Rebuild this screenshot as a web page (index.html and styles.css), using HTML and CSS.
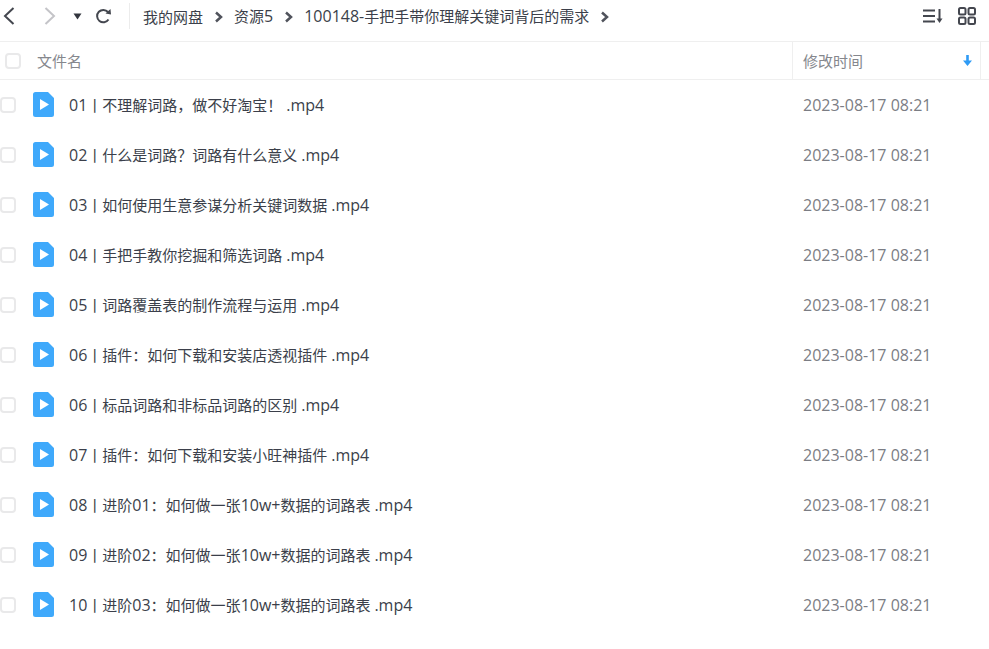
FILE: index.html
```html
<!DOCTYPE html>
<html lang="zh-CN">
  <head>
    <meta charset="UTF-8" />
    <meta name="viewport" content="width=device-width, initial-scale=1.0" />
    <title>我的网盘</title>
    <link rel="stylesheet" href="styles.css">
  </head>

  <body>
    <!-- toolbar -->
    <div class="toolbar">
      <div class="nav">
        <svg class="back" width="14" height="20" viewBox="0 0 14 20"><path d="M11.500 2 L3 10 L11.500 18" /></svg>
        <svg class="forward" width="14" height="20" viewBox="0 0 14 20"><path d="M2.500 2 L11 10 L2.500 18" /></svg>
        <svg class="drop" width="9" height="7" viewBox="0 0 9 7"><path d="M0.500 0.500 H8.500 L4.500 6.500 Z" /></svg>
        <svg class="refresh" width="17" height="17" viewBox="0 0 17 17"><path d="M13.500 11.500 A6.200 6.200 0 1 1 13 4" /><path class="fill" d="M10.500 5.500 L16 6.500 L15.500 1 Z" /></svg>
      </div>
      <div class="crumbs">
        <span>我的网盘</span>
        <svg class="sep" width="9" height="12" viewBox="0 0 9 12"><path d="M2 1.500 L7 6 L2 10.500" /></svg>
        <span>资源<i>5</i></span>
        <svg class="sep" width="9" height="12" viewBox="0 0 9 12"><path d="M2 1.500 L7 6 L2 10.500" /></svg>
        <span><i>100148-</i>手把手带你理解关键词背后的需求</span>
        <svg class="sep" width="9" height="12" viewBox="0 0 9 12"><path d="M2 1.500 L7 6 L2 10.500" /></svg>
      </div>
      <div class="tools">
        <svg class="sort" width="21" height="16" viewBox="0 0 21 16"><path d="M1 2.500 H13 M1 8 H13 M1 13.500 H13 M17.500 1 V13" /><path class="fill" d="M14.500 10.500 H20.500 L17.500 15 Z" /></svg>
        <svg class="grid" width="18" height="18" viewBox="0 0 18 18"><rect x="1" y="1" width="6.500" height="6.500" rx="1.500" /><rect x="10.500" y="1" width="6.500" height="6.500" rx="1.500" /><rect x="1" y="10.500" width="6.500" height="6.500" rx="1.500" /><rect x="10.500" y="10.500" width="6.500" height="6.500" rx="1.500" /></svg>
      </div>
    </div>

    <!-- table head -->
    <div class="head">
      <span class="check head-check"></span>
      <span class="head-name">文件名</span>
      <div class="head-time">
        <span>修改时间</span>
        <svg width="9" height="11" viewBox="0 0 9 11"><path d="M3.200 0 H5.800 V5.500 H9 L4.500 11 L0 5.500 H3.200 Z" /></svg>
      </div>
    </div>

    <!-- files -->
    <div class="list" id="list">
      <div class="row"><span class="check"></span><svg class="file" width="21" height="25" viewBox="0 0 21 25"><path class="paper" d="M2.500 0 H15 L21 6 V22.500 A2.500 2.500 0 0 1 18.500 25 H2.500 A2.500 2.500 0 0 1 0 22.500 V2.500 A2.500 2.500 0 0 1 2.500 0 Z" /><path class="play" d="M7 7 L16 12.500 L7 18 Z" /></svg><span class="name"><i>01</i>丨不理解词路，做不好淘宝！ <i>.mp4</i></span><span class="time">2023-08-17 08:21</span></div>
      <div class="row"><span class="check"></span><svg class="file" width="21" height="25" viewBox="0 0 21 25"><path class="paper" d="M2.500 0 H15 L21 6 V22.500 A2.500 2.500 0 0 1 18.500 25 H2.500 A2.500 2.500 0 0 1 0 22.500 V2.500 A2.500 2.500 0 0 1 2.500 0 Z" /><path class="play" d="M7 7 L16 12.500 L7 18 Z" /></svg><span class="name"><i>02</i>丨什么是词路？词路有什么意义 <i>.mp4</i></span><span class="time">2023-08-17 08:21</span></div>
      <div class="row"><span class="check"></span><svg class="file" width="21" height="25" viewBox="0 0 21 25"><path class="paper" d="M2.500 0 H15 L21 6 V22.500 A2.500 2.500 0 0 1 18.500 25 H2.500 A2.500 2.500 0 0 1 0 22.500 V2.500 A2.500 2.500 0 0 1 2.500 0 Z" /><path class="play" d="M7 7 L16 12.500 L7 18 Z" /></svg><span class="name"><i>03</i>丨如何使用生意参谋分析关键词数据 <i>.mp4</i></span><span class="time">2023-08-17 08:21</span></div>
      <div class="row"><span class="check"></span><svg class="file" width="21" height="25" viewBox="0 0 21 25"><path class="paper" d="M2.500 0 H15 L21 6 V22.500 A2.500 2.500 0 0 1 18.500 25 H2.500 A2.500 2.500 0 0 1 0 22.500 V2.500 A2.500 2.500 0 0 1 2.500 0 Z" /><path class="play" d="M7 7 L16 12.500 L7 18 Z" /></svg><span class="name"><i>04</i>丨手把手教你挖掘和筛选词路 <i>.mp4</i></span><span class="time">2023-08-17 08:21</span></div>
      <div class="row"><span class="check"></span><svg class="file" width="21" height="25" viewBox="0 0 21 25"><path class="paper" d="M2.500 0 H15 L21 6 V22.500 A2.500 2.500 0 0 1 18.500 25 H2.500 A2.500 2.500 0 0 1 0 22.500 V2.500 A2.500 2.500 0 0 1 2.500 0 Z" /><path class="play" d="M7 7 L16 12.500 L7 18 Z" /></svg><span class="name"><i>05</i>丨词路覆盖表的制作流程与运用 <i>.mp4</i></span><span class="time">2023-08-17 08:21</span></div>
      <div class="row"><span class="check"></span><svg class="file" width="21" height="25" viewBox="0 0 21 25"><path class="paper" d="M2.500 0 H15 L21 6 V22.500 A2.500 2.500 0 0 1 18.500 25 H2.500 A2.500 2.500 0 0 1 0 22.500 V2.500 A2.500 2.500 0 0 1 2.500 0 Z" /><path class="play" d="M7 7 L16 12.500 L7 18 Z" /></svg><span class="name"><i>06</i>丨插件：如何下载和安装店透视插件 <i>.mp4</i></span><span class="time">2023-08-17 08:21</span></div>
      <div class="row"><span class="check"></span><svg class="file" width="21" height="25" viewBox="0 0 21 25"><path class="paper" d="M2.500 0 H15 L21 6 V22.500 A2.500 2.500 0 0 1 18.500 25 H2.500 A2.500 2.500 0 0 1 0 22.500 V2.500 A2.500 2.500 0 0 1 2.500 0 Z" /><path class="play" d="M7 7 L16 12.500 L7 18 Z" /></svg><span class="name"><i>06</i>丨标品词路和非标品词路的区别 <i>.mp4</i></span><span class="time">2023-08-17 08:21</span></div>
      <div class="row"><span class="check"></span><svg class="file" width="21" height="25" viewBox="0 0 21 25"><path class="paper" d="M2.500 0 H15 L21 6 V22.500 A2.500 2.500 0 0 1 18.500 25 H2.500 A2.500 2.500 0 0 1 0 22.500 V2.500 A2.500 2.500 0 0 1 2.500 0 Z" /><path class="play" d="M7 7 L16 12.500 L7 18 Z" /></svg><span class="name"><i>07</i>丨插件：如何下载和安装小旺神插件 <i>.mp4</i></span><span class="time">2023-08-17 08:21</span></div>
      <div class="row"><span class="check"></span><svg class="file" width="21" height="25" viewBox="0 0 21 25"><path class="paper" d="M2.500 0 H15 L21 6 V22.500 A2.500 2.500 0 0 1 18.500 25 H2.500 A2.500 2.500 0 0 1 0 22.500 V2.500 A2.500 2.500 0 0 1 2.500 0 Z" /><path class="play" d="M7 7 L16 12.500 L7 18 Z" /></svg><span class="name"><i>08</i>丨进阶<i>01</i>：如何做一张<i>10w+</i>数据的词路表 <i>.mp4</i></span><span class="time">2023-08-17 08:21</span></div>
      <div class="row"><span class="check"></span><svg class="file" width="21" height="25" viewBox="0 0 21 25"><path class="paper" d="M2.500 0 H15 L21 6 V22.500 A2.500 2.500 0 0 1 18.500 25 H2.500 A2.500 2.500 0 0 1 0 22.500 V2.500 A2.500 2.500 0 0 1 2.500 0 Z" /><path class="play" d="M7 7 L16 12.500 L7 18 Z" /></svg><span class="name"><i>09</i>丨进阶<i>02</i>：如何做一张<i>10w+</i>数据的词路表 <i>.mp4</i></span><span class="time">2023-08-17 08:21</span></div>
      <div class="row"><span class="check"></span><svg class="file" width="21" height="25" viewBox="0 0 21 25"><path class="paper" d="M2.500 0 H15 L21 6 V22.500 A2.500 2.500 0 0 1 18.500 25 H2.500 A2.500 2.500 0 0 1 0 22.500 V2.500 A2.500 2.500 0 0 1 2.500 0 Z" /><path class="play" d="M7 7 L16 12.500 L7 18 Z" /></svg><span class="name"><i>10</i>丨进阶<i>03</i>：如何做一张<i>10w+</i>数据的词路表 <i>.mp4</i></span><span class="time">2023-08-17 08:21</span></div>
    </div>
  </body>
</html>
```

FILE: styles.css
```css
* {
  margin: 0;
  padding: 0;
  box-sizing: border-box;
}

body {
  width: 100%;
  min-height: 100vh;
  background-color: white;
  color: #3b3f4a;
  font-family: "Open Sans", "Noto Sans CJK SC", sans-serif;
  font-size: 15px;
  overflow: hidden;
}

/* latin runs sit a size up next to the chinese */
i {
  font-style: normal;
  font-size: 16px;
}

svg {
  flex: none;
  display: block;
}

svg path,
svg rect {
  fill: none;
  stroke: #44474f;
  stroke-width: 2;
}

svg path.fill {
  fill: #44474f;
  stroke: none;
}

/* toolbar */
.toolbar {
  height: 42px;
  display: flex;
  align-items: center;
  border-bottom: 1px solid #efefef;
  padding-bottom: 9px;
}

.nav {
  width: 130px;
  height: 26px;
  display: flex;
  align-items: center;
  padding-left: 2px;
  border-right: 1px solid #ececec;
}

.back {
  margin-right: 27px;
}

.forward {
  margin-right: 16px;
}

.forward path {
  stroke: #c4c4c8;
}

.drop {
  margin-right: 13px;
}

.drop path {
  fill: #33363e;
  stroke: none;
}

.crumbs {
  margin-left: 13px;
  display: flex;
  align-items: center;
  gap: 11px;
  flex: 1;
}

.sep {
  margin-top: 2px;
}

.sep path {
  stroke: #50535c;
  stroke-width: 2.500;
}

.tools {
  display: flex;
  align-items: center;
  gap: 15px;
  padding-right: 13px;
}

/* table head */
.head {
  height: 38px;
  display: flex;
  align-items: center;
  border-bottom: 1px solid #efefef;
  color: #85878d;
}

.check {
  width: 16px;
  height: 16px;
  flex: none;
  border: 2px solid #e9e9ea;
  border-radius: 4px;
  background-color: white;
}

.head-check {
  margin-left: 5px;
}

.head-name {
  margin-left: 16px;
  width: 755px;
}

.head-time {
  width: 189px;
  height: 100%;
  display: flex;
  align-items: center;
  justify-content: space-between;
  padding: 0 8px 0 10px;
  border-left: 1px solid #efefef;
  border-right: 1px solid #efefef;
}

.head-time path {
  fill: #2f9bf5;
  stroke: none;
}

/* files */
.row {
  height: 50px;
  display: flex;
  align-items: center;
}

.file {
  margin-left: 17px;
  margin-bottom: 2px;
}

.file .paper {
  fill: #3fa9fb;
  stroke: none;
}

.file .play {
  fill: white;
  stroke: none;
}

.name {
  margin-left: 15px;
  width: 734px;
}

.time {
  color: #7b7d84;
  font-size: 16px;
}
```
